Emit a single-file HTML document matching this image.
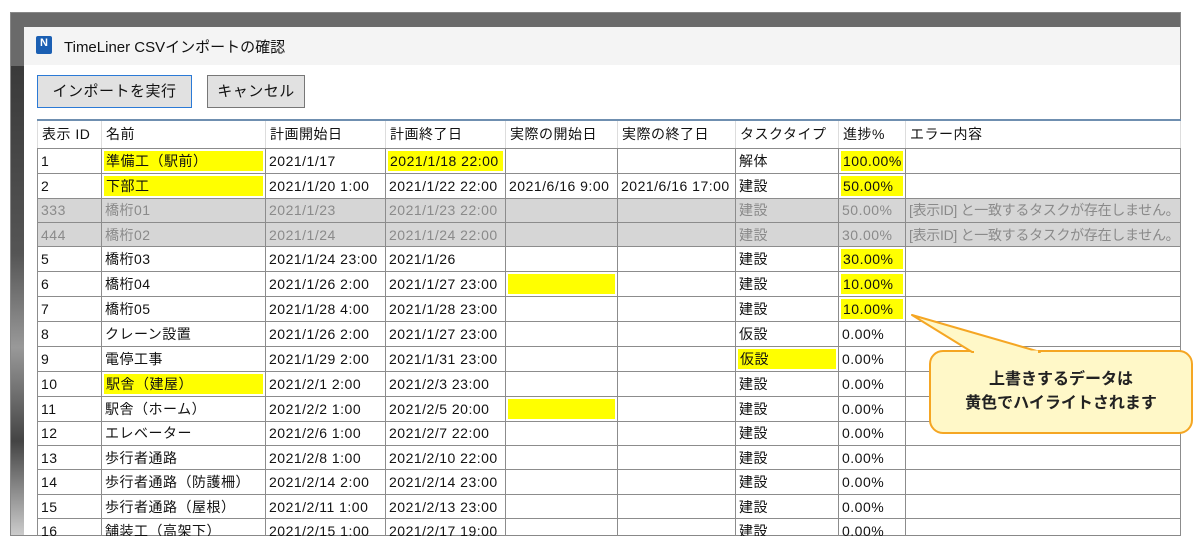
<!DOCTYPE html>
<html><head><meta charset="utf-8">
<style>
*{margin:0;padding:0;box-sizing:border-box}
body{width:1200px;height:547px;background:#fff;position:relative;overflow:hidden;font-family:"Liberation Sans","Noto Sans CJK JP",sans-serif;font-size:14px;color:#111}
.frame{position:absolute;left:10px;top:12px;width:1171px;height:524px;background:#6a6a6a;border:1px solid #888}
.strip{position:absolute;left:11px;top:66px;width:13px;height:469px;background:linear-gradient(#3a3a3a,#555 40%,#999 60%,#444 80%,#ccc)}
.win{position:absolute;left:24px;top:27px;width:1156px;height:508px;background:#fff}
.title{position:absolute;left:0;top:0;width:100%;height:38px;background:#f4f4f4}
.title span{position:absolute;left:40px;top:9px;font-size:15px;color:#111}
.icon{position:absolute;left:12px;top:9px;width:16px;height:18px;background:#1b5fb3;border-radius:2px;color:#fff;font-size:11px;font-weight:bold;text-align:center;line-height:14px}
.btn{position:absolute;top:48px;height:33px;background:#e1e1e1;border:1px solid #777;font-size:15px;text-align:center;line-height:31px;letter-spacing:.5px}
table{position:absolute;left:37px;top:119px;border-collapse:collapse;table-layout:fixed;border-top:2px solid #6f8fb0}
td{height:24.4px;border:1px solid #8c8c8c;padding:0 0 0 3px;white-space:nowrap;overflow:hidden;font-size:14px;letter-spacing:.5px;vertical-align:middle}
td.e{letter-spacing:-.3px}
tr.h td{height:28px;border-left:1px solid #ddd;border-right:1px solid #ddd;border-top:none;background:#fff;padding-left:4px}
tr.g td{background:#d6d6d6;color:#8a8a8a}
td.y{padding:2px}
td.y div{background:#ffff00;height:20px;line-height:20px;padding-left:2px}
.call{position:absolute;left:929px;top:350px;width:264px;height:84px;background:#fff8c8;border:2px solid #f5a623;border-radius:14px;text-align:center;font-weight:bold;font-size:16px;line-height:24px;padding-top:16px;color:#222}
</style></head><body>
<div class="frame"></div><div class="strip"></div>
<div class="win">
<div class="title"><div class="icon">N</div><span>TimeLiner CSVインポートの確認</span></div>
<div class="btn" style="left:13px;width:155px;border:1px solid #2b7ad6">インポートを実行</div>
<div class="btn" style="left:183px;width:98px">キャンセル</div>
</div>
<table>
<colgroup><col style="width:64px"><col style="width:164px"><col style="width:120px"><col style="width:120px"><col style="width:112px"><col style="width:118px"><col style="width:103px"><col style="width:67px"><col style="width:275px"></colgroup>
<tr class="h"><td>表示 ID</td><td>名前</td><td>計画開始日</td><td>計画終了日</td><td>実際の開始日</td><td>実際の終了日</td><td>タスクタイプ</td><td>進捗%</td><td>エラー内容</td></tr>
<tr><td>1</td><td class="y"><div>準備工（駅前）</div></td><td>2021/1/17</td><td class="y"><div>2021/1/18 22:00</div></td><td></td><td></td><td>解体</td><td class="y"><div>100.00%</div></td><td></td></tr>
<tr><td>2</td><td class="y"><div>下部工</div></td><td>2021/1/20 1:00</td><td>2021/1/22 22:00</td><td>2021/6/16 9:00</td><td>2021/6/16 17:00</td><td>建設</td><td class="y"><div>50.00%</div></td><td></td></tr>
<tr class="g"><td>333</td><td>橋桁01</td><td>2021/1/23</td><td>2021/1/23 22:00</td><td></td><td></td><td>建設</td><td>50.00%</td><td class="e">[表示ID] と一致するタスクが存在しません。</td></tr>
<tr class="g"><td>444</td><td>橋桁02</td><td>2021/1/24</td><td>2021/1/24 22:00</td><td></td><td></td><td>建設</td><td>30.00%</td><td class="e">[表示ID] と一致するタスクが存在しません。</td></tr>
<tr><td>5</td><td>橋桁03</td><td>2021/1/24 23:00</td><td>2021/1/26</td><td></td><td></td><td>建設</td><td class="y"><div>30.00%</div></td><td></td></tr>
<tr><td>6</td><td>橋桁04</td><td>2021/1/26 2:00</td><td>2021/1/27 23:00</td><td class="y"><div>&nbsp;</div></td><td></td><td>建設</td><td class="y"><div>10.00%</div></td><td></td></tr>
<tr><td>7</td><td>橋桁05</td><td>2021/1/28 4:00</td><td>2021/1/28 23:00</td><td></td><td></td><td>建設</td><td class="y"><div>10.00%</div></td><td></td></tr>
<tr><td>8</td><td>クレーン設置</td><td>2021/1/26 2:00</td><td>2021/1/27 23:00</td><td></td><td></td><td>仮設</td><td>0.00%</td><td></td></tr>
<tr><td>9</td><td>電停工事</td><td>2021/1/29 2:00</td><td>2021/1/31 23:00</td><td></td><td></td><td class="y"><div>仮設</div></td><td>0.00%</td><td></td></tr>
<tr><td>10</td><td class="y"><div>駅舎（建屋）</div></td><td>2021/2/1 2:00</td><td>2021/2/3 23:00</td><td></td><td></td><td>建設</td><td>0.00%</td><td></td></tr>
<tr><td>11</td><td>駅舎（ホーム）</td><td>2021/2/2 1:00</td><td>2021/2/5 20:00</td><td class="y"><div>&nbsp;</div></td><td></td><td>建設</td><td>0.00%</td><td></td></tr>
<tr><td>12</td><td>エレベーター</td><td>2021/2/6 1:00</td><td>2021/2/7 22:00</td><td></td><td></td><td>建設</td><td>0.00%</td><td></td></tr>
<tr><td>13</td><td>歩行者通路</td><td>2021/2/8 1:00</td><td>2021/2/10 22:00</td><td></td><td></td><td>建設</td><td>0.00%</td><td></td></tr>
<tr><td>14</td><td>歩行者通路（防護柵）</td><td>2021/2/14 2:00</td><td>2021/2/14 23:00</td><td></td><td></td><td>建設</td><td>0.00%</td><td></td></tr>
<tr><td>15</td><td>歩行者通路（屋根）</td><td>2021/2/11 1:00</td><td>2021/2/13 23:00</td><td></td><td></td><td>建設</td><td>0.00%</td><td></td></tr>
<tr><td>16</td><td>舗装工（高架下）</td><td>2021/2/15 1:00</td><td>2021/2/17 19:00</td><td></td><td></td><td>建設</td><td>0.00%</td><td></td></tr>
</table>
<div style="position:absolute;left:0;top:536px;width:1200px;height:11px;background:#fff"></div>
<div style="position:absolute;left:1181px;top:0;width:19px;height:547px;background:#fff"></div>
<div class="call">上書きするデータは<br>黄色でハイライトされます</div>
<svg style="position:absolute;left:0;top:0" width="1200" height="547"><polygon points="912,315 972,352 1040,352" fill="#fff8c8" stroke="#f5a623" stroke-width="2" stroke-linejoin="round"/><line x1="974" y1="352" x2="1038" y2="352" stroke="#fff8c8" stroke-width="3"/></svg>
</body></html>
